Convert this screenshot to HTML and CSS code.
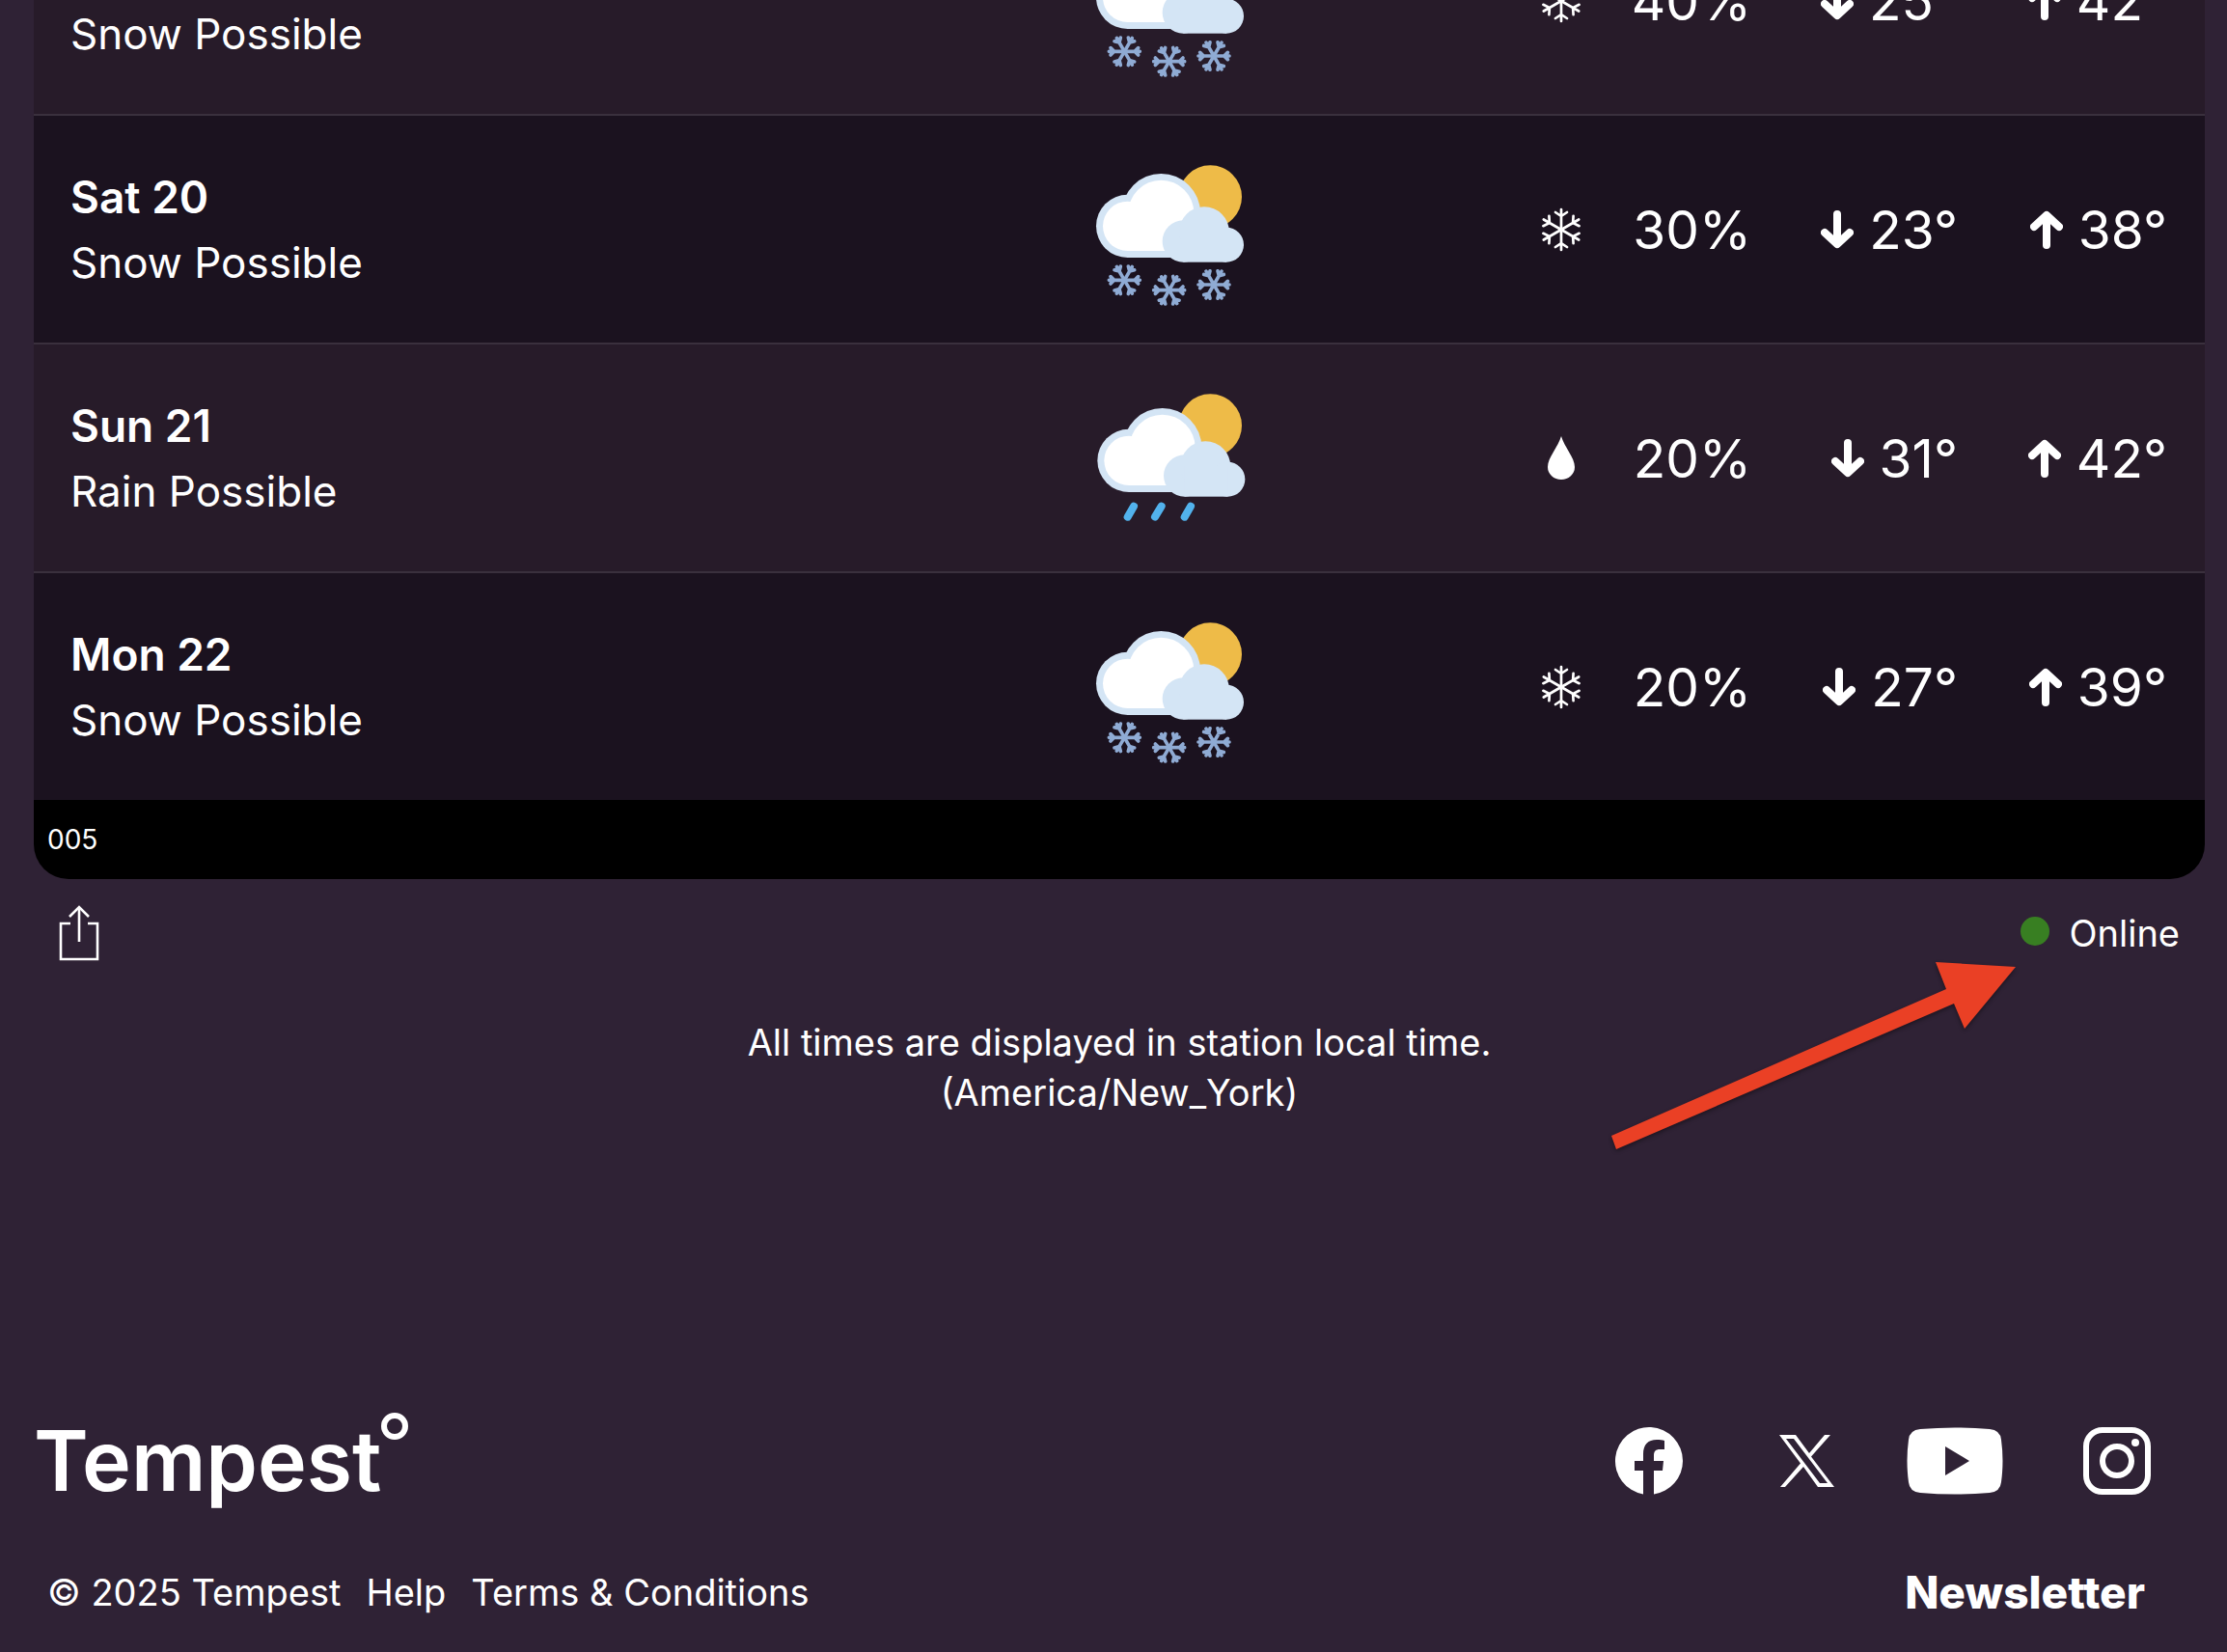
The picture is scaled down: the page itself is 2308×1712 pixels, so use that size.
FILE: index.html
```html
<!DOCTYPE html>
<html lang="en">
<head>
<meta charset="utf-8">
<title>Tempest forecast</title>
<meta name="viewport" content="width=device-width, initial-scale=1">
<link rel="stylesheet" href="styles.css">
</head>
<body>
<svg class="sprite" aria-hidden="true">
  <symbol id="clouds" viewBox="0 0 480 477" overflow="visible">
    <g fill="#d4e5f5">
      <circle cx="110" cy="229" r="98"/>
      <circle cx="214" cy="188" r="122"/>
      <rect x="110" y="186" width="194" height="141"/>
    </g>
    <g fill="#fff">
      <circle cx="110" cy="229" r="77"/>
      <circle cx="214" cy="188" r="102"/>
      <rect x="110" y="186" width="194" height="120"/>
    </g>
    <g fill="#d4e5f5">
      <circle cx="283" cy="276" r="65"/>
      <circle cx="348" cy="247" r="78"/>
      <circle cx="417" cy="287" r="54"/>
      <rect x="283" y="247" width="134" height="94"/>
    </g>
  </symbol>
  <symbol id="flake" viewBox="-60 -60 120 120">
    <g fill="none" stroke="#8fabd4" stroke-width="11" stroke-linecap="round">
      <path id="arm" d="M0 0H48M43 -11L32 0L43 11"/>
      <use href="#arm" transform="rotate(60)"/>
      <use href="#arm" transform="rotate(120)"/>
      <use href="#arm" transform="rotate(180)"/>
      <use href="#arm" transform="rotate(240)"/>
      <use href="#arm" transform="rotate(300)"/>
    </g>
  </symbol>
  <symbol id="snow-possible" viewBox="0 0 480 477">
    <circle cx="367" cy="138" r="98" fill="#eebb48"/>
    <use href="#clouds" width="480" height="477"/>
    <use href="#flake" x="40" y="337" width="120" height="120"/>
    <use href="#flake" x="179" y="368" width="120" height="120"/>
    <use href="#flake" x="318" y="351" width="120" height="120"/>
  </symbol>
  <symbol id="rain-possible" viewBox="0 0 480 477">
    <circle cx="367" cy="138" r="98" fill="#eebb48"/>
    <use href="#clouds" x="4" y="18" width="480" height="477"/>
    <path d="M129 389L110 422M215 389L195 422M306 389L287 422" stroke="#52b2ec" stroke-width="24" stroke-linecap="round"/>
  </symbol>
  <symbol id="snow" viewBox="-20 -23 40 46">
    <g fill="none" stroke="#fff" stroke-width="2.700" stroke-linecap="round">
      <path id="thin-arm" d="M0 0V-21M-6 -18L0 -14L6 -18"/>
      <use href="#thin-arm" transform="rotate(60)"/>
      <use href="#thin-arm" transform="rotate(120)"/>
      <use href="#thin-arm" transform="rotate(180)"/>
      <use href="#thin-arm" transform="rotate(240)"/>
      <use href="#thin-arm" transform="rotate(300)"/>
    </g>
  </symbol>
  <symbol id="drop" viewBox="-20 -23 40 46">
    <path d="M0 -23C3 -12 14 -1 14 9A14 13 0 0 1 -14 9C-14 -1 -3 -12 0 -23Z" fill="#fff"/>
  </symbol>
  <symbol id="down" viewBox="0 0 34 40">
    <path d="M17 4V34M4 23L17 35L30 23" fill="none" stroke="#fff" stroke-width="8" stroke-linecap="round" stroke-linejoin="round"/>
  </symbol>
  <symbol id="up" viewBox="0 0 34 40">
    <path d="M17 36V6M4 17L17 5L30 17" fill="none" stroke="#fff" stroke-width="8" stroke-linecap="round" stroke-linejoin="round"/>
  </symbol>
</svg>

<main>
  <section class="card">
    <ul class="days">
      <li class="day day-cut">
        <div class="name"><p class="sky">Snow Possible</p></div>
        <div class="detail">
          <svg class="weather"><use href="#snow-possible"/></svg>
          <div class="metrics">
            <svg class="kind"><use href="#snow"/></svg>
            <span class="value">40%</span>
            <span class="value"><svg class="arrow"><use href="#down"/></svg>25°</span>
            <span class="value"><svg class="arrow"><use href="#up"/></svg>42°</span>
          </div>
        </div>
      </li>
      <li class="day">
        <div class="name"><h2 class="date">Sat 20</h2><p class="sky">Snow Possible</p></div>
        <div class="detail">
          <svg class="weather"><use href="#snow-possible"/></svg>
          <div class="metrics">
            <svg class="kind"><use href="#snow"/></svg>
            <span class="value">30%</span>
            <span class="value"><svg class="arrow"><use href="#down"/></svg>23°</span>
            <span class="value"><svg class="arrow"><use href="#up"/></svg>38°</span>
          </div>
        </div>
      </li>
      <li class="day">
        <div class="name"><h2 class="date">Sun 21</h2><p class="sky">Rain Possible</p></div>
        <div class="detail">
          <svg class="weather"><use href="#rain-possible"/></svg>
          <div class="metrics">
            <svg class="kind"><use href="#drop"/></svg>
            <span class="value">20%</span>
            <span class="value"><svg class="arrow"><use href="#down"/></svg>31°</span>
            <span class="value"><svg class="arrow"><use href="#up"/></svg>42°</span>
          </div>
        </div>
      </li>
      <li class="day">
        <div class="name"><h2 class="date">Mon 22</h2><p class="sky">Snow Possible</p></div>
        <div class="detail">
          <svg class="weather"><use href="#snow-possible"/></svg>
          <div class="metrics">
            <svg class="kind"><use href="#snow"/></svg>
            <span class="value">20%</span>
            <span class="value"><svg class="arrow"><use href="#down"/></svg>27°</span>
            <span class="value"><svg class="arrow"><use href="#up"/></svg>39°</span>
          </div>
        </div>
      </li>
    </ul>
    <p class="code">005</p>
  </section>

  <div class="status">
    <button class="share" type="button" aria-label="Share">
      <svg width="42" height="58" viewBox="0 0 42 58" fill="none" stroke="#fff" stroke-width="2.600">
        <path d="M12 19H2V56H40V19H30"/>
        <path d="M21 38V2"/>
        <path d="M11 12L21 2L31 12"/>
      </svg>
    </button>
    <div class="online">
      <span class="dot"></span>
      <span>Online</span>
      <svg class="pointer" width="424" height="198" viewBox="0 0 424 198">
        <path d="M2 181L349 29L338 1L421 6L368 70L357 44L7 195Z" fill="#ea4025"/>
      </svg>
    </div>
  </div>

  <p class="note">All times are displayed in station local time.<br>(America/New_York)</p>
</main>

<footer class="footer">
  <div class="bar">
    <a class="logo" href="#">Tempest<span class="ring"></span></a>
    <nav class="social" aria-label="Social">
      <a href="#" aria-label="Facebook">
        <svg width="70" height="70" viewBox="0 0 70 70"><path fill="#fff" d="M70 35A35 35 0 1 0 29 69.500V45H20V35H29V28C29 18 34 13 43 13C46 13 49 13 51 14V23H46C42 23 40 25 40 29V35H50L49 45H40V69.500A35 35 0 0 0 70 35Z"/></svg>
      </a>
      <a href="#" aria-label="X">
        <svg width="82" height="56" viewBox="-25 0 82 56"><path fill="#fff" fill-rule="evenodd" d="M0 1H17L31 20L47 1H53L33 23.500L57 55H40L25 34L6 55H1L22 30.500ZM7 5L42 51H50L15 5Z"/></svg>
      </a>
      <a href="#" aria-label="YouTube">
        <svg width="100" height="70" viewBox="0 0 100 70"><path fill="#fff" fill-rule="evenodd" d="M14 2Q50 -1 86 2Q97 3 98 13Q101 35 98 57Q97 67 86 68Q50 71 14 68Q3 67 2 57Q-1 35 2 13Q3 3 14 2ZM40 20V50L65 35Z"/></svg>
      </a>
      <a href="#" aria-label="Instagram">
        <svg width="78" height="70" viewBox="-8 0 78 70"><rect x="3" y="3" width="64" height="64" rx="17" fill="none" stroke="#fff" stroke-width="6"/><circle cx="35" cy="35" r="15" fill="none" stroke="#fff" stroke-width="6"/><circle cx="54" cy="16" r="4" fill="#fff"/></svg>
      </a>
    </nav>
  </div>
  <div class="bar links">
    <div class="legal">
      <span>© 2025 Tempest</span>
      <a href="#">Help</a>
      <a href="#">Terms &amp; Conditions</a>
    </div>
    <a class="newsletter" href="#">Newsletter</a>
  </div>
</footer>
</body>
</html>
```

FILE: styles.css
```css
* {
  box-sizing: border-box;
}

body {
  margin: 0;
  padding: 0 23px 0 35px;
  background: #2f2235;
  color: #fff;
  font: 38px/52px Inter, "Liberation Sans", sans-serif;
}

h2, p, ul {
  margin: 0;
  padding: 0;
}

a {
  color: inherit;
  text-decoration: none;
}

svg {
  display: block;
  flex: none;
}

.sprite {
  position: absolute;
  width: 0;
  height: 0;
}

.card {
  overflow: hidden;
  border-radius: 0 0 36px 36px;
  background: #000;
}

.days {
  list-style: none;
}

.day {
  display: grid;
  grid-template-columns: 39fr 41fr;
  align-items: end;
  border-bottom: 2px solid #3a303d;
  background: #1b121f;
}

.day:nth-child(odd) {
  background: #271b29;
}

.day:last-child {
  border-bottom: 0;
}

/* The first row is scrolled half out of view. */
.day-cut {
  align-content: end;
  height: 120px;
  overflow: hidden;
}

.name {
  display: flex;
  flex-direction: column;
  justify-content: flex-end;
  padding: 0 0 49px 38px;
  font-size: 44px;
  line-height: 68px;
}

.date {
  font-size: 46px;
  font-weight: 600;
}

.detail {
  display: flex;
  align-items: center;
  justify-content: space-between;
  height: 235px;
  padding-right: 39px;
}

.weather {
  width: 160px;
  height: 159px;
}

.metrics {
  display: grid;
  grid-template-columns: 40px 177px 214px 217px;
  align-items: center;
}

.kind {
  width: 40px;
  height: 46px;
}

.value {
  display: flex;
  align-items: center;
  justify-content: flex-end;
  gap: 16px;
  font-size: 55px;
  line-height: 66px;
}

.arrow {
  width: 34px;
  height: 40px;
}

.code {
  padding: 15px 14px;
  font-size: 28px;
}

.status {
  display: flex;
  align-items: center;
  justify-content: space-between;
  padding: 27px 26px 0;
}

.share {
  padding: 0;
  border: 0;
  background: none;
  cursor: pointer;
}

.online {
  position: relative;
  display: flex;
  align-items: center;
  gap: 20px;
}

.dot {
  width: 30px;
  height: 30px;
  margin-bottom: 4px;
  border-radius: 50%;
  background: #387f22;
}

/* Annotation arrow that lies over the page below the status. */
.pointer {
  position: absolute;
  top: 55px;
  right: 167px;
  filter: drop-shadow(0 2px 2px rgba(0, 0, 0, .4));
}

.note {
  padding-top: 58px;
  text-align: center;
}

.footer {
  padding-top: 306px;
}

.bar {
  display: flex;
  align-items: center;
  justify-content: space-between;
}

.logo {
  display: flex;
  font-size: 86px;
  font-weight: 600;
  line-height: 100px;
}

.ring {
  width: 28px;
  height: 28px;
  border: 6px solid #fff;
  border-radius: 50%;
}

.social {
  display: flex;
  align-items: center;
  gap: 75px;
  padding-right: 56px;
}

.links {
  padding: 60px 62px 46px 14px;
}

.legal {
  display: flex;
  gap: 26px;
}

.newsletter {
  font-size: 46px;
  font-weight: 800;
}
```
